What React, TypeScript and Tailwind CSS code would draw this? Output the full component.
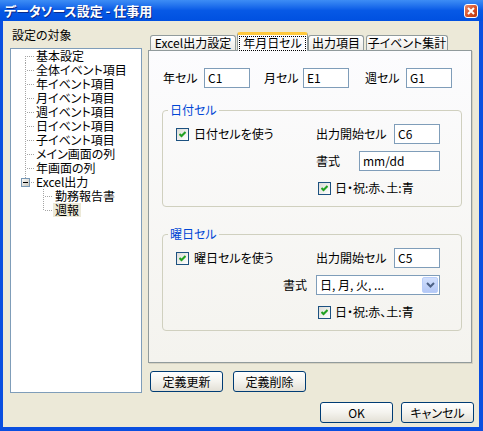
import React from "react";

const treeItems: { label: string; kind: string; selected?: boolean }[] = [
  { label: "基本設定", kind: "first" },
  { label: "全体イベント項目", kind: "mid" },
  { label: "年イベント項目", kind: "mid" },
  { label: "月イベント項目", kind: "mid" },
  { label: "週イベント項目", kind: "mid" },
  { label: "日イベント項目", kind: "mid" },
  { label: "子イベント項目", kind: "mid" },
  { label: "メイン画面の列", kind: "mid" },
  { label: "年画面の列", kind: "mid" },
  { label: "Excel出力", kind: "parent" },
  { label: "勤務報告書", kind: "child" },
  { label: "週報", kind: "childLast", selected: true },
];

const dot = { stroke: "#A5A5A5", strokeWidth: 1, strokeDasharray: "1 1" };

function Connector({ kind }: { kind: string }) {
  if (kind === "child" || kind === "childLast") {
    return (
      <svg width="44" height="14" className="shrink-0">
        <line x1="32.5" y1="0" x2="32.5" y2={kind === "child" ? 14 : 8} {...dot} />
        <line x1="34" y1="7.5" x2="42" y2="7.5" {...dot} />
      </svg>
    );
  }
  if (kind === "parent") {
    return (
      <svg width="25" height="14" className="shrink-0">
        <defs>
          <linearGradient id="mb" x1="0" y1="0" x2="1" y2="1">
            <stop offset="0" stopColor="#FFFFFF" />
            <stop offset="1" stopColor="#C4C1B6" />
          </linearGradient>
        </defs>
        <line x1="14.5" y1="0" x2="14.5" y2="3" {...dot} />
        <rect x="10.5" y="3.5" width="8" height="8" fill="url(#mb)" stroke="#7898B5" />
        <line x1="12" y1="7.5" x2="17" y2="7.5" stroke="#000" />
        <line x1="20" y1="7.5" x2="24" y2="7.5" {...dot} />
      </svg>
    );
  }
  return (
    <svg width="25" height="14" className="shrink-0">
      <line x1="14.5" y1={kind === "first" ? 7 : 0} x2="14.5" y2="14" {...dot} />
      <line x1="16" y1="7.5" x2="24" y2="7.5" {...dot} />
    </svg>
  );
}

function TextBox({ value, w }: { value: string; w: string }) {
  return (
    <div className={`h-[20px] ${w} border border-[#7F9DB9] bg-white pl-[3px] flex items-center shrink-0`}>
      {value}
    </div>
  );
}

function CheckBox() {
  return (
    <span className="w-[13px] h-[13px] shrink-0 border border-[#1C5180] bg-linear-to-br from-[#DCDCD7] to-white flex items-center justify-center">
      <svg width="7" height="7" viewBox="0 0 7 7">
        <path d="M0.5 3 L2.5 5 L6.5 1" stroke="#21A121" strokeWidth="2" fill="none" />
      </svg>
    </span>
  );
}

function Combo() {
  return (
    <div className="h-[20px] w-[124px] border border-[#7F9DB9] bg-white pl-[3px] pr-px flex items-center justify-between shrink-0">
      <span>日, 月, 火, ...</span>
      <span className="w-[16px] h-[16px] rounded-[2px] border border-[#B9CEF9] bg-linear-to-b from-[#D2E0FD] to-[#B4C8F6] flex items-center justify-center">
        <svg width="9" height="6" viewBox="0 0 9 6">
          <path d="M1 1 L4.5 4.5 L8 1" stroke="#4D6185" strokeWidth="2" fill="none" />
        </svg>
      </span>
    </div>
  );
}

function Btn({ label }: { label: string }) {
  return (
    <button className="h-[21px] w-[73px] rounded-[3px] border border-[#003C74] bg-linear-to-b from-white via-[#F4F3EE] to-[#E3E0D6] flex items-center justify-center text-black">
      {label}
    </button>
  );
}

function Group({ title, children }: { title: string; children: React.ReactNode }) {
  return (
    <fieldset className="w-[300px] ml-[13px] border border-[#D0D0BF] rounded-[4px] px-0 pt-[7px] pb-[8px]">
      <legend className="ml-[5px] px-[2px] text-[#0046D5] leading-[14px]">{title}</legend>
      <div className="flex flex-col gap-[7px]">{children}</div>
    </fieldset>
  );
}

const tabCls =
  "h-[15px] rounded-t-[3px] border border-b-0 border-[#919B9C] bg-linear-to-b from-white to-[#ECEBE6] flex items-center justify-center whitespace-nowrap";

export default function App() {
  return (
    <div className="w-[483px] h-[431px] flex flex-col bg-[#0A4FE0] text-[12px] leading-[14px] text-black font-['Noto_Sans_CJK_JP','Noto_Sans',sans-serif] [font-feature-settings:'palt']">
      {/* title bar */}
      <div className="h-[21px] shrink-0 flex items-center justify-between pl-[4px] pr-[5px] bg-linear-to-b from-[#3D8DF5] via-[#0759E6] to-[#0050E0]">
        <span className="text-white font-bold text-[13px] leading-[15px] [text-shadow:1px_1px_0_#0A2A8A]">
          データソース設定 - 仕事用
        </span>
        <span className="w-[14px] h-[14px] rounded-[3px] border border-white bg-linear-to-br from-[#E88A6A] via-[#D9532A] to-[#B8360C] flex items-center justify-center">
          <svg width="8" height="8" viewBox="0 0 8 8">
            <path d="M1 1 L7 7 M7 1 L1 7" stroke="#fff" strokeWidth="2" />
          </svg>
        </span>
      </div>

      {/* body */}
      <div className="flex-1 ml-[3px] mr-[4px] mb-[4px] bg-[#ECE9D8] flex flex-col">
        <div className="flex">
          {/* left column */}
          <div className="pl-[7px] pt-[7px] w-[145px] shrink-0">
            <div className="pl-[2px] h-[14px] mb-[6px]">設定の対象</div>
            <div className="w-[132px] h-[345px] border border-[#7F9DB9] bg-white">
              {treeItems.map((it) => (
                <div key={it.label} className="h-[14px] flex items-center">
                  <Connector kind={it.kind} />
                  <span
                    className={
                      it.selected
                        ? "h-[14px] px-[2px] -ml-[2px] bg-[#ECE9D8] whitespace-nowrap"
                        : "whitespace-nowrap"
                    }
                  >
                    {it.label}
                  </span>
                </div>
              ))}
            </div>
          </div>

          {/* right column */}
          <div className="pt-[11px] flex flex-col">
            <div className="h-[18px] flex items-end pl-[2px]">
              <div className={`${tabCls} w-[86px]`}>Excel出力設定</div>
              <div className="relative z-10 h-[19px] w-[71px] ml-px -mb-px rounded-t-[3px] border-x border-[#919B9C] border-t-[3px] border-t-[#FFC83C] bg-[#FCFCFE] flex items-center justify-center whitespace-nowrap">
                <span className="border border-dotted border-black px-[3px] h-[15px] flex items-center">年月日セル</span>
              </div>
              <div className={`${tabCls} w-[56px]`}>出力項目</div>
              <div className={`${tabCls} w-[82px] ml-[2px]`}>子イベント集計</div>
            </div>

            <div className="w-[324px] h-[313px] border border-[#919B9C] bg-linear-to-b from-[#FCFCFE] to-[#F4F3EE] shadow-[1px_1px_0_#D6D2C2] pt-[17px]">
              <div className="flex items-center pl-[14px]">
                <span className="w-[41px]">年セル</span>
                <TextBox value="C1" w="w-[46px]" />
                <span className="w-[39px] ml-[14px]">月セル</span>
                <TextBox value="E1" w="w-[46px]" />
                <span className="w-[41px] ml-[16px]">週セル</span>
                <TextBox value="G1" w="w-[46px]" />
              </div>

              <div className="mt-[15px]">
                <Group title="日付セル">
                  <div className="h-[20px] flex items-center">
                    <div className="w-[153px] pl-[13px] flex items-center gap-[5px]">
                      <CheckBox />
                      <span>日付セルを使う</span>
                    </div>
                    <span className="w-[78px]">出力開始セル</span>
                    <TextBox value="C6" w="w-[46px]" />
                  </div>
                  <div className="h-[20px] flex items-center pl-[153px]">
                    <span className="w-[43px]">書式</span>
                    <TextBox value="mm/dd" w="w-[81px]" />
                  </div>
                  <div className="h-[20px] flex items-center gap-[4px] pl-[155px]">
                    <CheckBox />
                    <span>日・祝:赤、土:青</span>
                  </div>
                </Group>
              </div>

              <div className="mt-[20px]">
                <Group title="曜日セル">
                  <div className="h-[20px] flex items-center">
                    <div className="w-[153px] pl-[13px] flex items-center gap-[5px]">
                      <CheckBox />
                      <span>曜日セルを使う</span>
                    </div>
                    <span className="w-[78px]">出力開始セル</span>
                    <TextBox value="C5" w="w-[46px]" />
                  </div>
                  <div className="h-[20px] flex items-center pl-[120px]">
                    <span className="w-[33px]">書式</span>
                    <Combo />
                  </div>
                  <div className="h-[20px] flex items-center gap-[4px] pl-[155px]">
                    <CheckBox />
                    <span>日・祝:赤、土:青</span>
                  </div>
                </Group>
              </div>
            </div>

            <div className="mt-[8px] pl-[2px] flex gap-[10px]">
              <Btn label="定義更新" />
              <Btn label="定義削除" />
            </div>
          </div>
        </div>

        <div className="mt-[9px] flex justify-end gap-[8px] pr-[5px]">
          <Btn label="OK" />
          <Btn label="キャンセル" />
        </div>
      </div>
    </div>
  );
}
